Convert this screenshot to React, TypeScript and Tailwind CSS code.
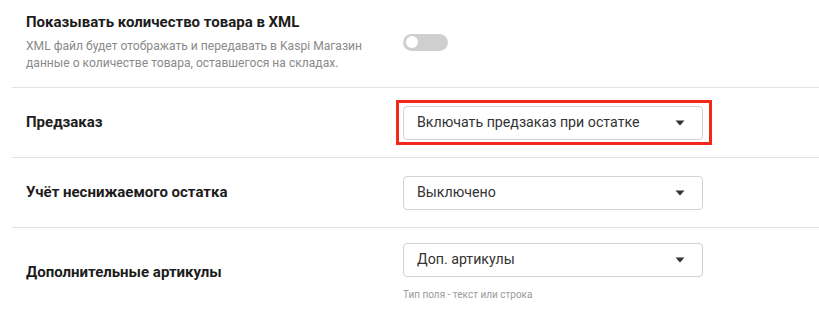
function Caret() {
  return (
    <svg width="10" height="6" viewBox="0 0 10 6" className="shrink-0">
      <path d="M0.5 0.5h9L5 5.5z" fill="#333" />
    </svg>
  );
}

function Select({ value }: { value: string }) {
  return (
    <div className="flex h-[34px] w-[300px] items-center justify-between rounded border border-[#d2d2d2] bg-white pl-[13px] pr-[17px] text-[14.2px] text-[#333]">
      <span>{value}</span>
      <Caret />
    </div>
  );
}

export default function App() {
  return (
    <div className="min-h-[331px] w-[819px] bg-white pl-3 font-['Roboto',sans-serif] text-[#1c1c1c]">
      <div className="flex h-[88px] items-center border-b border-[#e2e2e2] pb-[3px] pl-[14px]">
        <div className="w-[377px]">
          <h3 className="text-[15px] font-bold leading-5">Показывать количество товара в XML</h3>
          <p className="mt-[6px] text-[12.1px] leading-[17px] text-[#8a8a8a]">
            XML файл будет отображать и передавать в Kaspi Магазин данные о количестве товара, оставшегося на складах.
          </p>
        </div>
        <div className="flex h-[17px] w-[45px] items-center rounded-full bg-[#cfcfcf] px-[3px]">
          <div className="size-[12px] rounded-full bg-white" />
        </div>
      </div>

      <div className="flex h-[70px] items-center border-b border-[#e2e2e2] pl-[14px]">
        <div className="w-[377px] text-[15px] font-bold">Предзаказ</div>
        <div className="relative">
          <Select value="Включать предзаказ при остатке" />
          <span className="pointer-events-none absolute -bottom-[5px] -left-[7px] -right-[9px] -top-[6px] border-[3px] border-[#f3281a]" />
        </div>
      </div>

      <div className="flex h-[70px] items-center border-b border-[#e2e2e2] pl-[14px]">
        <div className="w-[377px] text-[15px] font-bold">Учёт неснижаемого остатка</div>
        <Select value="Выключено" />
      </div>

      <div className="flex items-center pb-4 pl-[14px] pt-[15px]">
        <div className="w-[377px] text-[15px] font-bold">Дополнительные артикулы</div>
        <div>
          <Select value="Доп. артикулы" />
          <p className="mt-[10px] text-[10px] text-[#9a9a9a]">Тип поля - текст или строка</p>
        </div>
      </div>
    </div>
  );
}
